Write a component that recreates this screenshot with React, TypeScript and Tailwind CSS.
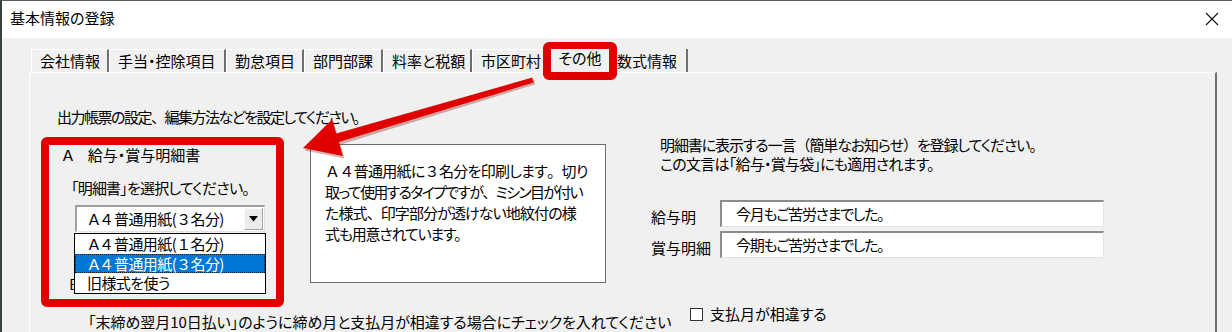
import React from "react";

const tabs = [
  { label: "会社情報", cls: "w-[78px]" },
  { label: "手当・控除項目", cls: "w-[117px]" },
  { label: "勤怠項目", cls: "w-[78px]" },
  { label: "部門部課", cls: "w-[79px]" },
  { label: "料率と税額", cls: "w-[89px]" },
  { label: "市区町村", cls: "w-[77px]" },
];

const FW = "[font-feature-settings:normal]";
const WIDE = "、。（）Ａ４３１";

// Keep full-width punctuation / alphanumerics at full width, kana proportional
function J({ s }: { s: string }) {
  const parts: React.ReactNode[] = [];
  let buf = "";
  Array.from(s).forEach((c, i) => {
    if (WIDE.includes(c)) {
      if (buf) parts.push(buf);
      buf = "";
      parts.push(
        <span key={i} className={FW}>
          {c}
        </span>
      );
    } else {
      buf += c;
    }
  });
  if (buf) parts.push(buf);
  return <>{parts}</>;
}

function PaperLabel({ n }: { n: string }) {
  return (
    <>
      <span className="tracking-[1.5px]">Ａ４</span>普通用紙(<span className={FW}>{n}</span>名分)
    </>
  );
}

export default function App() {
  return (
    <div className="relative w-[1232px] h-[332px] overflow-hidden bg-[#f0f0f0] text-black font-['Noto_Sans_CJK_JP','Noto_Sans',sans-serif] [font-feature-settings:'palt']">
      <div className="flex flex-col h-full border-l-2 border-l-[#38423a] border-t border-t-[#5a5a5a]">
        {/* Title bar */}
        <div className="h-[37px] bg-white flex items-center justify-between pl-[8px] pr-[13px] pb-[3px] shrink-0">
          <span className="text-[15px] leading-[20px] whitespace-nowrap">基本情報の登録</span>
          <svg width="14" height="14" viewBox="0 0 14 14" className="mt-[1px]">
            <path d="M1 1 L13 13 M13 1 L1 13" stroke="#111" strokeWidth="1.1" fill="none" />
          </svg>
        </div>

        {/* Body */}
        <div className="flex-1 pt-[8px] pl-[27px]">
          {/* Tabs */}
          <div className="flex items-end h-[26px] ml-[2px] text-[15px]">
            {tabs.map((t) => (
              <div
                key={t.label}
                className={`${t.cls} h-[23px] flex items-center pl-[8px] border-l border-t border-white border-r-2 border-r-[#6e6e6e] whitespace-nowrap leading-[20px]`}
              >
                {t.label}
              </div>
            ))}
            <div className="w-[63px] h-[27px] -mb-[1px] relative z-10 bg-[#f0f0f0] flex items-center justify-center pb-[4px] border-l border-t border-white border-r-2 border-r-[#6e6e6e] whitespace-nowrap leading-[20px]">
              その他
            </div>
            <div className="w-[76px] h-[23px] flex items-center pl-[5px] border-r-2 border-r-[#6e6e6e] whitespace-nowrap leading-[20px]">
              数式情報
            </div>
          </div>

          {/* Panel */}
          <div className="w-[1188px] h-[300px] border-t border-l border-white border-r-2 border-r-[#6e6e6e] text-[15px] leading-[20px]">
            <div className="pt-[34px] pl-[27px] whitespace-nowrap tracking-[-1.5px]">
              <J s="出力帳票の設定、編集方法などを設定してください。" />
            </div>

            {/* Main row */}
            <div className="flex items-start mt-[10px] pl-[11px]">
              {/* Group A with red highlight */}
              <div className="w-[243px] h-[170px] border-[8px] border-[#e10000] rounded-[6px] shrink-0 flex flex-col items-start">
                <div className="ml-[13px] whitespace-nowrap flex">
                  <span>Ａ</span>
                  <span className="ml-[14px]">給与・賞与明細書</span>
                </div>
                <div className="ml-[22px] mt-[13px] whitespace-nowrap tracking-[-0.8px]">「明細書」を選択してください。</div>
                <div className="relative ml-[26px] mt-[7px] w-[190px] h-[27px] flex border-t-2 border-l-2 border-[#a0a0a0] border-r border-b border-r-[#e3e3e3] border-b-[#e3e3e3] bg-white">
                  <div className="flex-1 flex items-center pl-[11px] whitespace-nowrap tracking-[-0.6px]">
                    <PaperLabel n="３" />
                  </div>
                  <div className="w-[19px] mr-[1px] my-[1px] bg-[#ececec] border border-[#fafafa] border-r-[#a0a0a0] border-b-[#a0a0a0] flex items-center justify-center">
                    <svg width="9" height="6" viewBox="0 0 9 6">
                      <path d="M0 0 H9 L4.5 5.5 Z" fill="#000" />
                    </svg>
                  </div>
                  {/* Open dropdown list */}
                  <div className="absolute left-[-3px] top-[26px] w-[192px] h-[61px] bg-white border border-black z-10 flex flex-col tracking-[-0.6px]">
                    <div className="h-[20px] flex items-center pl-[13px] whitespace-nowrap">
                      <PaperLabel n="１" />
                    </div>
                    <div className="h-[19px] flex items-center pl-[12px] bg-[#0078d7] text-white border border-dotted border-[#1a1a1a] whitespace-nowrap">
                      <PaperLabel n="３" />
                    </div>
                    <div className="h-[20px] flex items-center pl-[12px] whitespace-nowrap">旧様式を使う</div>
                  </div>
                </div>
                <div className="ml-[19px] mt-[42px] whitespace-nowrap">Ｂ</div>
              </div>

              {/* Description box */}
              <div className="ml-[26px] mt-[7px] w-[296px] h-[139px] bg-white border border-[#6d6d6d] pt-[15px] pl-[14px] text-[15px] leading-[21px] shrink-0">
                <div className="whitespace-nowrap tracking-[-0.7px]">
                  <J s="Ａ４普通用紙に３名分を印刷します。切り" />
                </div>
                <div className="whitespace-nowrap tracking-[-1.7px]">
                  <J s="取って使用するタイプですが、ミシン目が付い" />
                </div>
                <div className="whitespace-nowrap tracking-[-0.9px]">
                  <J s="た様式、印字部分が透けない地紋付の様" />
                </div>
                <div className="whitespace-nowrap tracking-[-1.2px]">式も用意されています。</div>
              </div>

              {/* Right column */}
              <div className="ml-[45px] flex flex-col">
                <div className="pl-[9px] -mt-[2px] leading-[19px]">
                  <div className="whitespace-nowrap tracking-[-1.1px]">
                    <J s="明細書に表示する一言（簡単なお知らせ）を登録してください。" />
                  </div>
                  <div className="whitespace-nowrap tracking-[-0.75px]">この文言は「給与・賞与袋」にも適用されます。</div>
                </div>
                <div className="flex items-start mt-[27px]">
                  <div className="w-[69px] mt-[7px] whitespace-nowrap">給与明</div>
                  <div className="w-[384px] h-[27px] bg-white border-t-2 border-l-2 border-[#8c8c8c] border-r border-b border-r-[#e3e3e3] border-b-[#e3e3e3] flex items-center pl-[14px] whitespace-nowrap tracking-[-1.3px]">
                    今月もご苦労さまでした。
                  </div>
                </div>
                <div className="flex items-start mt-[4px]">
                  <div className="w-[69px] mt-[7px] whitespace-nowrap">賞与明細</div>
                  <div className="w-[384px] h-[27px] bg-white border-t-2 border-l-2 border-[#8c8c8c] border-r border-b border-r-[#e3e3e3] border-b-[#e3e3e3] flex items-center pl-[14px] whitespace-nowrap tracking-[-1.3px]">
                    今期もご苦労さまでした。
                  </div>
                </div>
              </div>
            </div>

            {/* Bottom row */}
            <div className="flex items-start">
              <div className="ml-[58px] w-[602px] mt-[5px] whitespace-nowrap tracking-[-0.05px]">
                「末締め翌月10日払い」のように締め月と支払月が相違する場合にチェックを入れてください
              </div>
              <div className="flex items-center gap-[7px] -mt-[3px]">
                <div className="w-[13px] h-[13px] bg-white border border-[#333]" />
                <span className="whitespace-nowrap">支払月が相違する</span>
              </div>
            </div>
          </div>
        </div>
      </div>

      {/* Red highlight around selected tab */}
      <div className="absolute left-[543px] top-[42px] w-[74px] h-[38px] border-[8px] border-t-[7px] border-[#e10000] rounded-[6px] z-20" />

      {/* Red arrow */}
      <svg className="absolute left-0 top-0 z-20 pointer-events-none" width="1232" height="332" viewBox="0 0 1232 332">
        <polygon
          points="304.5,150.5 344.5,158.5 340.5,144.5 535,84.5 534,79.5 338,136 333.5,122"
          fill="#7a0000"
          opacity="0.3"
        />
        <polygon
          points="303,148 342.9,156 338.8,142.1 533.7,82.4 532.3,77.6 336.2,133.5 332.1,119.6"
          fill="#e10000"
        />
      </svg>
    </div>
  );
}
